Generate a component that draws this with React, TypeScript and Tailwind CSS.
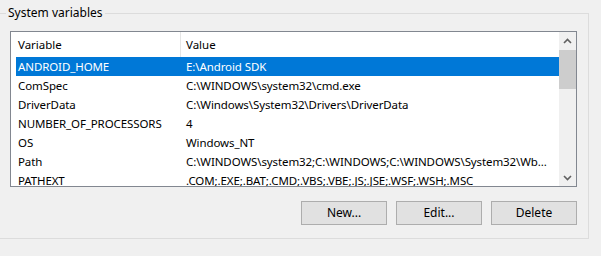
import React from 'react';

const rows: [string, string][] = [
  ['ANDROID_HOME', 'E:\\Android SDK'],
  ['ComSpec', 'C:\\WINDOWS\\system32\\cmd.exe'],
  ['DriverData', 'C:\\Windows\\System32\\Drivers\\DriverData'],
  ['NUMBER_OF_PROCESSORS', '4'],
  ['OS', 'Windows_NT'],
  ['Path', 'C:\\WINDOWS\\system32;C:\\WINDOWS;C:\\WINDOWS\\System32\\Wb...'],
  ['PATHEXT', '.COM;.EXE;.BAT;.CMD;.VBS;.VBE;.JS;.JSE;.WSF;.WSH;.MSC'],
];

function Chevron({ down }: { down?: boolean }) {
  return (
    <svg width="9" height="6" viewBox="0 0 9 6" className={down ? 'rotate-180' : ''}>
      <path d="M1 5 L4.5 1.5 L8 5" fill="none" stroke="#606060" strokeWidth="1.6" />
    </svg>
  );
}

export default function App() {
  return (
    <div className="w-[601px] h-[256px] overflow-hidden bg-[#f0f0f0] pt-[13px] font-['Noto_Sans',sans-serif] text-[12px] text-black">
      <div className="relative -ml-[3px] w-[592px] h-[226px] border border-[#dcdcdc] pl-[12px] pt-[17px]">
        <span className="absolute -top-[10px] left-[8px] bg-[#f0f0f0] px-[2px] leading-[18px]">
          System variables
        </span>

        <div className="flex w-[567px] h-[156px] border border-[#828790] bg-white overflow-hidden text-[11.5px]">
          <div className="flex-1 flex flex-col overflow-hidden">
            <div className="flex h-[25px] shrink-0 items-center">
              <div className="w-[170px] h-full flex items-center pl-[7px] border-r border-[#e5e5e5]">Variable</div>
              <div className="pl-[5px]">Value</div>
            </div>
            {rows.map(([name, value], i) => (
              <div
                key={name}
                className={
                  'ml-[5px] flex h-[19px] shrink-0 items-center pl-[2px] whitespace-nowrap tracking-[-0.1px] ' +
                  (i === 0 ? 'bg-[#0078d7] text-white' : '')
                }
              >
                <span className="w-[168px] shrink-0">{name}</span>
                <span>{value}</span>
              </div>
            ))}
          </div>
          <div className="w-[17px] shrink-0 flex flex-col bg-[#f0f0f0]">
            <div className="h-[18px] flex items-center justify-center">
              <Chevron />
            </div>
            <div className="h-[39px] bg-[#cdcdcd]" />
            <div className="flex-1" />
            <div className="h-[17px] flex items-center justify-center">
              <Chevron down />
            </div>
          </div>
        </div>

        <div className="mt-[14px] flex w-[567px] justify-end gap-[9px]">
          <button className="w-[86px] h-[24px] bg-[#e1e1e1] border border-[#adadad]">New...</button>
          <button className="w-[86px] h-[24px] bg-[#e1e1e1] border border-[#adadad]">Edit...</button>
          <button className="w-[86px] h-[24px] bg-[#e1e1e1] border border-[#adadad]">Delete</button>
        </div>
      </div>
    </div>
  );
}
